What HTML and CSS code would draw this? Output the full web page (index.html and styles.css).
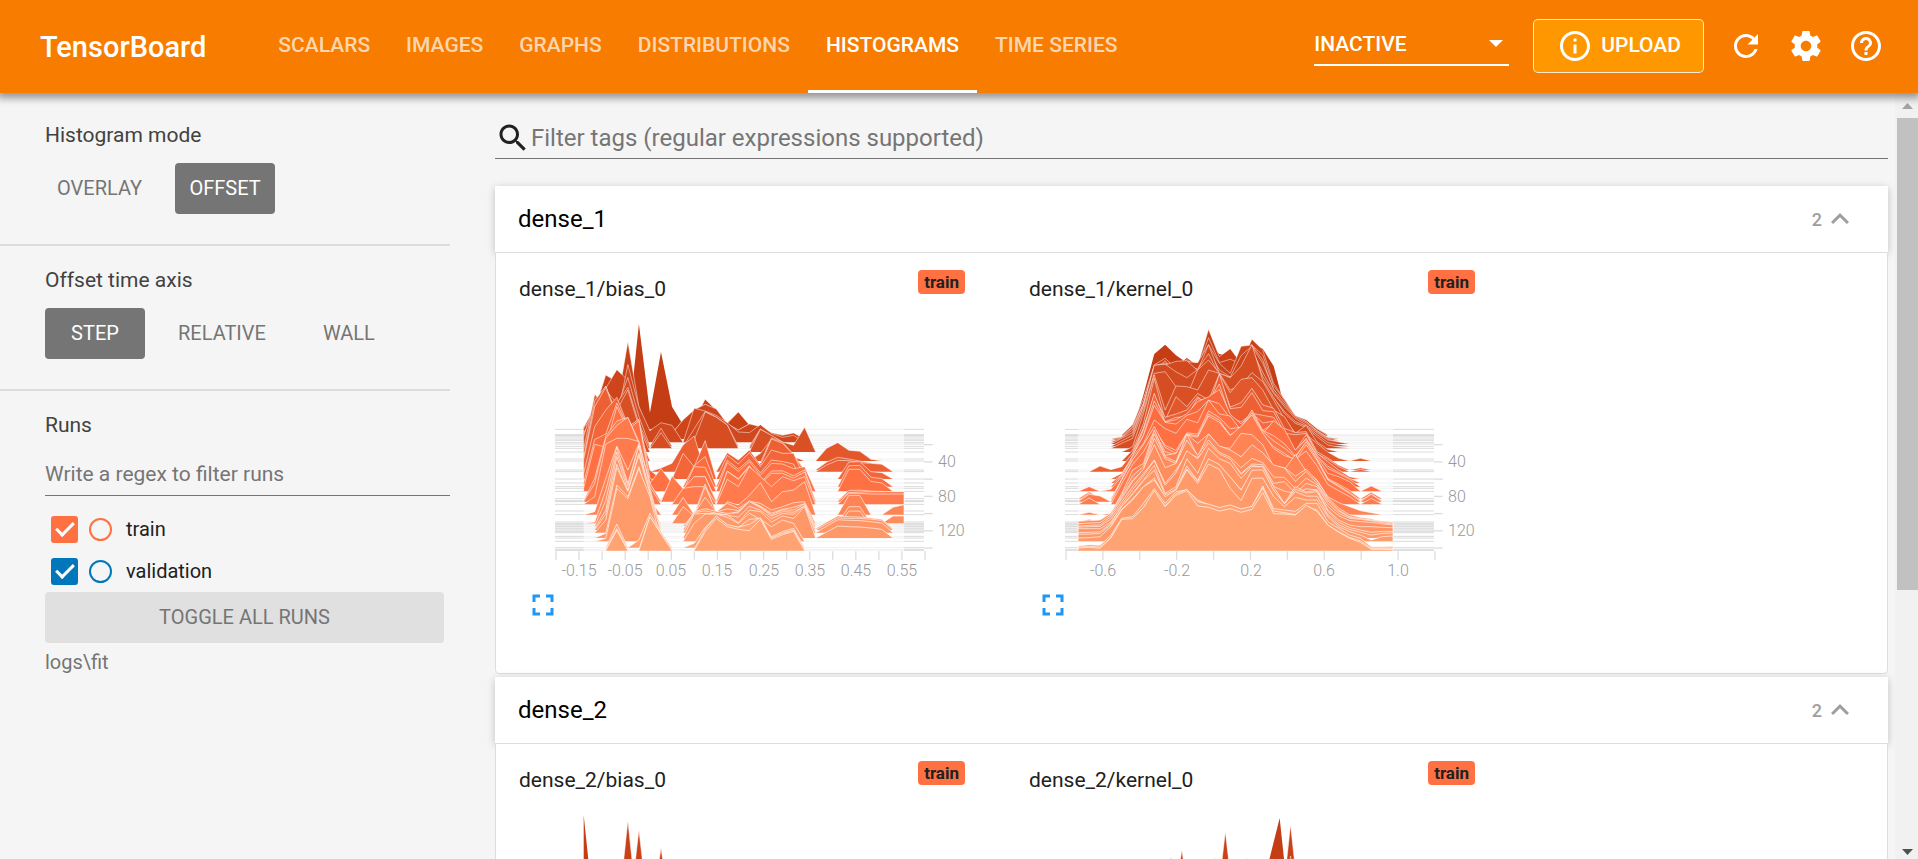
FILE: index.html
```html
<!DOCTYPE html>
<html lang="en">
<head>
<meta charset="utf-8">
<title>TensorBoard</title>
<link rel="stylesheet" href="styles.css">
</head>
<body>
<header class="topbar">
  <h1 class="brand">TensorBoard</h1>
  <nav class="tabs">
    <a class="tab" href="#scalars">SCALARS</a>
    <a class="tab" href="#images">IMAGES</a>
    <a class="tab" href="#graphs">GRAPHS</a>
    <a class="tab" href="#distributions">DISTRIBUTIONS</a>
    <a class="tab tab-active" href="#histograms" aria-current="page">HISTOGRAMS</a>
    <a class="tab" href="#timeseries">TIME SERIES</a>
  </nav>
  <div class="actions">
    <div class="select-wrap">
      <select class="plugin-select" aria-label="Inactive plugins"><option>INACTIVE</option></select>
      <svg class="select-arrow" viewBox="0 0 14 7" aria-hidden="true"><path d="M0 0h14L7 7z"/></svg>
    </div>
    <button class="upload" type="button">
      <svg class="icon" viewBox="0 0 24 24" aria-hidden="true"><path d="M11 7h2v2h-2zm0 4h2v6h-2zm1-9C6.48 2 2 6.48 2 12s4.48 10 10 10 10-4.48 10-10S17.52 2 12 2zm0 18c-4.41 0-8-3.59-8-8s3.59-8 8-8 8 3.59 8 8-3.59 8-8 8z"/></svg>
      <span>UPLOAD</span>
    </button>
    <button class="icon-button" type="button" aria-label="Reload">
      <svg class="icon" viewBox="0 0 24 24"><path d="M17.65 6.35C16.2 4.9 14.21 4 12 4c-4.42 0-7.99 3.58-7.99 8s3.57 8 7.99 8c3.73 0 6.84-2.55 7.73-6h-2.08c-.82 2.33-3.04 4-5.65 4-3.31 0-6-2.69-6-6s2.69-6 6-6c1.66 0 3.14.69 4.22 1.78L13 11h7V4l-2.35 2.35z"/></svg>
    </button>
    <button class="icon-button" type="button" aria-label="Settings">
      <svg class="icon" viewBox="0 0 24 24"><path d="M19.43 12.98c.04-.32.07-.64.07-.98s-.03-.66-.07-.98l2.11-1.65c.19-.15.24-.42.12-.64l-2-3.46c-.12-.22-.39-.3-.61-.22l-2.49 1c-.52-.4-1.08-.73-1.69-.98l-.38-2.65C14.46 2.18 14.25 2 14 2h-4c-.25 0-.46.18-.49.42l-.38 2.65c-.61.25-1.17.59-1.69.98l-2.49-1c-.23-.09-.49 0-.61.22l-2 3.46c-.13.22-.07.49.12.64l2.11 1.65c-.04.32-.07.65-.07.98s.03.66.07.98l-2.11 1.65c-.19.15-.24.42-.12.64l2 3.46c.12.22.39.3.61.22l2.49-1c.52.4 1.08.73 1.69.98l.38 2.65c.03.24.24.42.49.42h4c.25 0 .46-.18.49-.42l.38-2.65c.61-.25 1.17-.59 1.69-.98l2.49 1c.23.09.49 0 .61-.22l2-3.46c.12-.22.07-.49-.12-.64l-2.11-1.65zM12 15.5c-1.93 0-3.5-1.57-3.5-3.5s1.57-3.5 3.5-3.5 3.5 1.57 3.5 3.5-1.57 3.5-3.5 3.5z"/></svg>
    </button>
    <button class="icon-button" type="button" aria-label="Help">
      <svg class="icon" viewBox="0 0 24 24"><path d="M11 18h2v-2h-2v2zm1-16C6.48 2 2 6.48 2 12s4.48 10 10 10 10-4.48 10-10S17.52 2 12 2zm0 18c-4.41 0-8-3.59-8-8s3.59-8 8-8 8 3.59 8 8-3.59 8-8 8zm0-14c-2.21 0-4 1.79-4 4h2c0-1.1.9-2 2-2s2 .9 2 2c0 2-3 1.75-3 5h2c0-2.25 3-2.5 3-5 0-2.21-1.79-4-4-4z"/></svg>
    </button>
  </div>
</header>
<div class="workspace">
  <aside class="sidebar">
    <section class="panel panel-first">
      <h2 class="panel-title">Histogram mode</h2>
      <div class="choices">
        <button class="choice" type="button">OVERLAY</button>
        <button class="choice choice-on" type="button">OFFSET</button>
      </div>
    </section>
    <section class="panel">
      <h2 class="panel-title">Offset time axis</h2>
      <div class="choices">
        <button class="choice choice-on" type="button">STEP</button>
        <button class="choice" type="button">RELATIVE</button>
        <button class="choice" type="button">WALL</button>
      </div>
    </section>
    <section class="panel panel-runs">
      <h2 class="panel-title">Runs</h2>
      <input class="run-filter" type="text" placeholder="Write a regex to filter runs" aria-label="Filter runs">
      <ul class="runs">
        <li class="run run-train">
          <input class="run-check" type="checkbox" id="run-train" checked>
          <input class="run-only" type="radio" name="only" aria-label="Show only train">
          <label for="run-train">train</label>
        </li>
        <li class="run run-validation">
          <input class="run-check" type="checkbox" id="run-validation" checked>
          <input class="run-only" type="radio" name="only" aria-label="Show only validation">
          <label for="run-validation">validation</label>
        </li>
      </ul>
      <button class="toggle-all" type="button">TOGGLE ALL RUNS</button>
      <p class="logdir">logs\fit</p>
    </section>
  </aside>
  <main class="content">
    <div class="tag-filter">
      <svg class="icon" viewBox="0 0 24 24" aria-hidden="true"><path d="M15.5 14h-.79l-.28-.27C15.41 12.59 16 11.11 16 9.5 16 5.91 13.09 3 9.5 3S3 5.91 3 9.5 5.91 16 9.5 16c1.61 0 3.09-.59 4.23-1.57l.27.28v.79l5 4.99L20.49 19l-4.99-5zm-6 0C7.01 14 5 11.99 5 9.5S7.01 5 9.5 5 14 7.01 14 9.5 11.99 14 9.5 14z"/></svg>
      <input class="tag-input" type="text" placeholder="Filter tags (regular expressions supported)" aria-label="Filter tags">
    </div>
    <section class="group">
      <button class="group-head" type="button">
        <span class="group-name">dense_1</span>
        <span class="group-count">2</span>
        <svg class="chevron" viewBox="0 0 24 24" aria-hidden="true"><path d="M12 8l-6 6 1.410 1.410L12 10.830l4.590 4.580L18 14z"/></svg>
      </button>
      <div class="group-body">
        <article class="card">
          <div class="card-head"><h3 class="card-title">dense_1/bias_0</h3><span class="chip">train</span></div>
          <svg class="chart" data-chart="bias1" role="img" aria-label="Histogram of dense_1/bias_0"></svg>
          <button class="expand" type="button" aria-label="Toggle card size"><svg class="icon" viewBox="0 0 24 24"><path d="M7 14H5v5h5v-2H7v-3zm-2-4h2V7h3V5H5v5zm12 7h-3v2h5v-5h-2v3zM14 5v2h3v3h2V5h-5z"/></svg></button>
        </article>
        <article class="card">
          <div class="card-head"><h3 class="card-title">dense_1/kernel_0</h3><span class="chip">train</span></div>
          <svg class="chart" data-chart="kernel1" role="img" aria-label="Histogram of dense_1/kernel_0"></svg>
          <button class="expand" type="button" aria-label="Toggle card size"><svg class="icon" viewBox="0 0 24 24"><path d="M7 14H5v5h5v-2H7v-3zm-2-4h2V7h3V5H5v5zm12 7h-3v2h5v-5h-2v3zM14 5v2h3v3h2V5h-5z"/></svg></button>
        </article>
      </div>
    </section>
    <section class="group">
      <button class="group-head" type="button">
        <span class="group-name">dense_2</span>
        <span class="group-count">2</span>
        <svg class="chevron" viewBox="0 0 24 24" aria-hidden="true"><path d="M12 8l-6 6 1.410 1.410L12 10.830l4.590 4.580L18 14z"/></svg>
      </button>
      <div class="group-body">
        <article class="card">
          <div class="card-head"><h3 class="card-title">dense_2/bias_0</h3><span class="chip">train</span></div>
          <svg class="chart" data-chart="bias2" role="img" aria-label="Histogram of dense_2/bias_0"></svg>
        </article>
        <article class="card">
          <div class="card-head"><h3 class="card-title">dense_2/kernel_0</h3><span class="chip">train</span></div>
          <svg class="chart" data-chart="kernel2" role="img" aria-label="Histogram of dense_2/kernel_0"></svg>
        </article>
      </div>
    </section>
  </main>
  <div class="scrollbar" aria-hidden="true">
    <svg class="scroll-arrow scroll-up" viewBox="0 0 11 6"><path d="M0 6h11L5.500 0z"/></svg>
    <div class="scroll-track"><div class="scroll-thumb"></div></div>
    <svg class="scroll-arrow" viewBox="0 0 11 6"><path d="M0 0h11L5.500 6z"/></svg>
  </div>
</div>
<script src="charts.js"></script>
</body>
</html>
```
FILE: styles.css
```css
*, *::after { box-sizing: border-box; }
body {
  margin: 0;
  height: 100vh;
  display: flex;
  flex-direction: column;
  overflow: hidden;
  background: #f5f5f5;
  color: #212121;
  font: 400 21px/25px Roboto, "Liberation Sans", sans-serif;
}
h1, h2, h3, p, ul { margin: 0; padding: 0; font-weight: 400; }
button, input, select { font: inherit; color: inherit; border: 0; padding: 0; margin: 0; background: none; border-radius: 0; }
input:focus { outline: 0; }
.icon { width: 36px; height: 36px; fill: currentColor; display: block; flex: none; }

.topbar {
  position: relative;
  z-index: 2;
  display: flex;
  align-items: stretch;
  flex: none;
  height: 93px;
  padding: 0 34px 0 40px;
  background: #f77c00;
  color: #fff;
  font-weight: 500;
  box-shadow: 0 2px 8px 3px rgba(0, 0, 0, .4);
}
.brand { align-self: center; margin-right: 54px; font-size: 29px; line-height: 34px; font-weight: 500; }
.tabs { display: flex; }
.tab {
  display: flex;
  align-items: center;
  padding: 0 18px;
  border-bottom: 3px solid transparent;
  color: rgba(255, 255, 255, .7);
  text-decoration: none;
}
.tab-active { color: #fff; border-color: #fff; }
.actions { display: flex; align-items: center; gap: 24px; margin-left: auto; padding-bottom: 2px; }
.select-wrap { position: relative; width: 195px; }
.plugin-select { appearance: none; width: 100%; height: 40px; border-bottom: 2px solid #fff; }
.select-arrow { position: absolute; right: 6px; top: 14px; width: 14px; height: 7px; fill: #fff; pointer-events: none; }
.upload {
  display: flex;
  align-items: center;
  gap: 8px;
  height: 54px;
  padding: 0 22px 0 23px;
  background: #ff9800;
  border: 1px solid rgba(255, 255, 255, .8);
  border-radius: 5px;
}

.workspace { display: flex; flex: 1; min-height: 0; }
.sidebar { flex: 0 0 450px; }
.panel { padding: 22px 0 30px 45px; border-bottom: 2px solid #dcdcdc; }
.panel-first { padding-top: 30px; }
.panel-runs { border: 0; }
.panel-title { font-size: 21px; color: #424242; }
.choices { display: flex; gap: 21px; margin-top: 15px; }
.choice { min-width: 100px; height: 51px; padding: 0 12px; border-radius: 4px; font-size: 20px; color: #757575; }
.choice-on { background: #757575; color: #fff; }
.run-filter { width: 100%; height: 44px; margin-top: 14px; border-bottom: 1px solid #757575; }
.run-filter::placeholder, .tag-input::placeholder { color: #757575; opacity: 1; }
.runs { list-style: none; display: flex; flex-direction: column; gap: 15px; margin-top: 20px; padding-left: 6px; }
.run { display: flex; align-items: center; font-size: 20px; height: 27px; }
.run-train { --run: #ff7043; }
.run-validation { --run: #0077bb; }
.run-check {
  appearance: none;
  display: flex;
  align-items: center;
  justify-content: center;
  width: 27px;
  height: 27px;
  border-radius: 3px;
  background: var(--run);
}
.run-check:checked::after {
  content: "";
  width: 18px;
  height: 10px;
  margin-bottom: 5px;
  border: solid #fff;
  border-width: 0 0 3px 3px;
  transform: rotate(-45deg);
}
.run-only { appearance: none; width: 23px; height: 23px; margin: 0 14px 0 11px; border: 2px solid var(--run); border-radius: 50%; }
.toggle-all { display: block; width: calc(100% - 6px); height: 51px; margin-top: 7px; border-radius: 4px; background: #e0e0e0; color: #757575; font-size: 20px; }
.logdir { margin-top: 7px; font-size: 20px; color: #757575; }

.content { flex: 1; min-width: 0; padding: 24px 7px 0 45px; overflow: hidden; }
.tag-filter { display: flex; align-items: center; height: 42px; border-bottom: 1px solid #757575; }
.tag-input { flex: 1; min-width: 0; font-size: 24px; height: 40px; }
.group { margin-top: 3px; }
.tag-filter + .group { margin-top: 27px; }
.group-head {
  position: relative;
  display: flex;
  align-items: center;
  width: 100%;
  height: 66px;
  padding: 0 30px 0 23px;
  background: #fff;
  color: #000;
  text-align: left;
  box-shadow: 0 2px 8px rgba(0, 0, 0, .22);
}
.group-name { flex: 1; font-size: 24px; }
.group-count { font-size: 18px; font-weight: 500; color: #9e9e9e; }
.chevron { width: 36px; height: 36px; fill: #9e9e9e; }
.group-body {
  position: relative;
  display: flex;
  gap: 60px;
  padding: 17px 23px 50px;
  background: #fff;
  border: 1px solid #ddd;
  border-radius: 0 0 4px 4px;
}
.card { width: 450px; }
.card-head { display: flex; justify-content: space-between; height: 32px; padding-right: 4px; }
.card-title { align-self: flex-end; font-size: 21px; }
.chip { align-self: flex-start; height: 24px; padding: 0 6px; border-radius: 4px; background: #ff7043; font-size: 17px; line-height: 24px; font-weight: 700; }
.chart { display: block; width: 450px; height: 277px; margin-top: 8px; overflow: visible; }
.axis-label { font-size: 16px; font-weight: 300; fill: #999; }
.expand { margin-left: 6px; color: #2196f3; display: block; }

.scrollbar { flex: 0 0 23px; display: flex; flex-direction: column; align-items: center; padding: 10px 0 4px 2px; background: #f1f1f1; }
.scroll-arrow { width: 11px; height: 6px; fill: #505050; flex: none; }
.scroll-up { fill: #a3a3a3; }
.scroll-track { flex: 1; width: 100%; padding: 9px 0 5px; }
.scroll-thumb { height: 65%; background: #c1c1c1; }
```
FILE: charts.js
```js
// Ridge-line histograms. Plot units are thirds of a pixel.
// Each layer: baseline | bin:top ... ; bins that are left out are empty.
const STEPS = [358, 374, 377, 381, 387, 391, 397, 402, 409, 415, 426, 447, 453, 480, 485, 507, 519, 530,
  535, 544, 566, 572, 575, 583, 603, 614, 636, 640, 644, 648, 651, 656, 660, 664, 668, 679, 684, 694, 713, 718, 722];

const CHARTS = {
  bias1: {
    x0: 161, step: 33.14, ends: [161, 1122], ticks: 17,
    skip: [377, 391, 402, 447, 519, 535, 566, 603, 636, 644, 651, 664, 679],
    labels: [[1, '-0.15'], [3, '-0.05'], [5, '0.05'], [7, '0.15'], [9, '0.25'], [11, '0.35'], [13, '0.45'], [15, '0.55']],
    layers: `358|5:42 6:308 7:126 8:290 9:345
374|0:350 1:320 2:300 3:290 4:95 5:290 9:335 10:330 11:268 12:300 13:340 14:306 15:345 16:352 17:370
381|0:353 1:300 2:195 3:215 4:280 5:310 8:370 9:330 10:300 11:283 12:297 13:342 14:360 15:342 16:350 17:368
387|0:353 1:290 2:235 3:179 4:210 5:300 8:370 9:330 10:300 11:283 12:297 13:342 14:360 15:342 16:350 17:368 18:376 19:369
397|0:355 1:310 2:228 3:330 4:164 5:290 6:362 7:338 8:346 10:295 11:303 12:316 13:338 14:366 15:368 16:344 17:370 18:382 19:376
415|0:370 1:325 2:240 3:280 4:232 5:340 7:368 10:390 11:306 12:322 13:345 16:358 17:378 18:402
426|0:380 1:270 2:260 3:300 4:240 5:350 16:358 17:376 18:396 19:406 20:352
453|0:420 1:253 2:290 3:320 4:330 5:370 16:430 17:388 18:402 19:440 22:415 23:398 24:421 25:424 26:448
485|0:450 1:290 2:232 3:320 4:350 5:370 7:474 8:460 9:405 10:378 13:428 14:450 15:420 16:465 17:387 18:400 19:435 22:465 23:451 24:452 25:458 26:460 27:463
507|0:490 1:350 2:300 3:262 4:345 5:340 6:480 9:430 10:470 11:392 13:436 14:462 15:428 16:470 17:420 18:430 19:430 24:456 25:455 26:485 27:488
544|0:535 1:403 2:411 3:290 4:360 5:332 6:520 7:476 8:520 10:470 11:472 13:458 14:484 15:455 16:496 17:460 18:462 19:476 20:470 24:478 25:478 26:514 27:519
575|1:520 2:385 3:346 4:322 5:400 6:520 8:498 9:536 10:500 11:500 13:484 14:508 15:470 16:522 17:490 18:490 19:504 20:486 24:548 25:546 26:545 27:545 28:545 29:545
583|1:560 2:402 3:385 4:385 5:395 6:530 9:535 10:530 11:530 13:508 14:530 15:470 16:500 17:530 18:500 19:512 20:500 24:550 25:550 26:552 27:552 28:552 29:552
614|1:605 2:505 3:408 4:480 5:400 6:570 9:562 11:522 13:575 14:585 15:556 16:518 17:575 18:545 19:540 20:515 24:556 25:556 28:592 29:584
640|1:636 2:540 3:412 4:520 5:405 6:600 9:590 10:618 11:530 12:605 13:580 14:595 15:574 16:580 17:600 18:590 19:578 20:575 24:590 25:590 28:618 29:618
656|2:600 3:440 4:540 5:430 6:535 10:608 11:598 12:606 13:612 14:605 15:572 16:590 17:614 18:600 19:600 20:582 22:636 23:618 24:620 25:621 26:624 27:628
684|2:670 3:525 4:560 5:470 6:590 10:612 11:610 12:612 13:615 14:638 15:600 16:605 17:636 18:618 19:625 20:590 22:666 23:648 24:650 25:651 26:654 27:658
694|2:685 3:535 4:566 5:476 6:560 10:640 11:612 12:612 13:622 14:640 15:610 16:628 17:650 18:630 19:640
713|3:642 5:690 6:610 7:665 10:700 11:652 12:620 13:645 14:652 15:628 16:625 17:680 18:665 19:655
722|3:661 6:620 7:672 11:665 12:625 13:650 14:658 15:662 16:628 17:688 18:674 19:664`
  },
  kernel1: {
    x0: 115, step: 32.55, ends: [114, 1059], ticks: 11,
    skip: [381, 447, 535, 603, 644, 651, 664],
    labels: [[1, '-0.6'], [3, '-0.2'], [5, '0.2'], [7, '0.6'], [9, '1.0']],
    layers: `358|6:255 7:132 8:104 9:136 10:158 11:170 12:100 13:132 14:138 15:160 16:100 17:116 18:168 19:290 20:340
374|5:345 6:270 7:170 8:150 9:170 10:143 11:167 12:58 13:140 14:116 15:160 16:88 17:120 18:220 19:268 20:318 21:330 22:356
387|4:380 5:350 6:280 7:184 8:152 9:200 10:155 11:158 12:104 13:160 14:190 15:109 16:105 17:150 18:240 19:280 20:320 21:335 22:362 23:382
402|4:385 5:368 6:290 7:167 8:165 9:154 10:152 11:182 12:104 13:190 14:202 15:190 16:115 17:200 18:250 19:290 20:325 21:345 22:368 23:390 24:396
415|4:400 5:385 6:300 7:190 8:185 9:230 10:258 11:180 12:150 13:190 14:203 15:168 16:104 17:210 18:262 19:310 20:340 21:352 22:380 23:405 24:411
426|5:410 6:310 7:195 8:300 9:228 10:230 11:240 12:180 13:190 14:240 15:225 16:188 17:215 18:270 19:328 20:370 21:346 22:396 23:418
453|5:420 6:340 7:205 8:330 9:260 10:290 11:250 12:270 13:192 14:248 15:208 16:203 17:240 18:300 19:320 20:372 21:374 22:400 23:426 24:445 26:445
485|2:468 3:479 4:470 5:430 6:355 7:258 8:322 9:312 10:300 11:260 12:290 13:192 14:296 15:292 16:248 17:302 18:305 19:370 20:374 21:370 22:432 23:448 24:470 26:478
507|4:490 5:440 6:360 7:250 8:335 9:322 10:320 11:265 12:276 13:222 14:320 15:336 16:310 17:316 18:322 19:370 20:422 21:374 22:430 23:455 24:480 25:500
544|1:530 3:538 4:500 5:440 6:400 7:330 8:356 9:370 10:328 11:338 12:270 13:312 14:318 15:362 16:304 17:372 18:332 19:358 20:420 21:388 22:440 23:490 24:500 25:515 27:528
575|1:553 2:558 4:510 5:450 6:404 7:350 8:412 9:430 10:372 11:378 12:312 13:330 14:380 15:360 16:318 17:374 18:410 19:430 20:452 21:404 22:452 23:510 24:530 25:550 27:553
614|1:607 3:610 4:550 5:480 6:460 7:360 8:436 9:430 10:372 11:400 12:372 13:410 14:415 15:370 16:374 17:404 18:470 19:478 20:434 21:484 22:510 23:560 24:578 25:590 26:602 27:608
640|0:634 1:632 2:630 3:610 4:560 5:510 6:480 7:385 8:446 9:460 10:372 11:440 12:372 13:408 14:420 15:440 16:404 17:428 18:465 19:474 20:514 21:484 22:520 23:568 24:600 25:620 26:627 27:630 28:633 29:636
656|0:648 1:646 2:645 3:620 4:575 5:530 6:490 7:450 8:520 9:480 10:430 11:442 12:412 13:440 14:450 15:490 16:462 17:464 18:520 19:515 20:550 21:520 22:530 23:580 24:610 25:625 26:628 27:632 28:638 29:642
668|0:656 1:656 2:656 3:636 4:590 5:550 6:510 7:466 8:550 9:530 10:446 11:490 12:415 13:446 14:460 15:505 16:470 17:470 18:530 19:580 20:530 21:546 22:540 23:600 24:630 25:645 26:650 27:650 28:652 29:653
694|0:684 1:683 2:680 3:650 4:600 5:570 6:530 7:510 8:560 9:540 10:480 11:520 12:462 13:478 14:535 15:572 16:505 17:504 18:560 19:590 20:562 21:570 22:570 23:620 24:650 25:665 26:675 27:690 28:680 29:678
713|0:708 1:704 2:706 3:676 4:625 5:620 6:580 7:536 8:580 9:545 10:540 11:570 12:585 13:595 14:588 15:598 16:590 17:528 18:596 19:600 20:604 21:580 22:580 23:635 24:655 25:675 26:685 27:710 28:710 29:709
722|0:714 1:712 2:715 3:684 4:628 5:626 6:592 7:542 8:590 9:556 10:542 11:588 12:592 13:603 14:596 15:607 16:598 17:548 18:611 19:612 20:615 21:586 22:604 23:645 24:667 25:685 26:697 27:718 28:718 29:719`
  },
  bias2: {
    x0: 161, step: 33.14, ends: [161, 1122], ticks: 17, labels: [], skip: [],
    layers: `358|0:42
374|4:60 7:141
377|5:87
722|4:650 5:640 6:660`
  },
  kernel2: {
    x0: 393, step: 32.6, ends: [114, 1059], ticks: 11, labels: [], skip: [],
    layers: `358|9:182 10:51
374|1:147 5:93 11:72
377|0:168 4:168 7:171 11:165
722|4:650 5:640 6:660`
  }
};

const PALETTE = [[358, 197, 61, 20], [544, 255, 112, 67], [722, 255, 163, 114]];
const BINS = 30;

function colorAt(y) {
  const [a, b] = y < PALETTE[1][0] ? PALETTE : PALETTE.slice(1);
  const t = (y - a[0]) / (b[0] - a[0]);
  return 'rgb(' + [1, 2, 3].map(i => Math.round(a[i] + (b[i] - a[i]) * t)).join() + ')';
}

function parseLayer(line) {
  const [base, points] = line.split('|');
  const heights = new Array(BINS).fill(0);
  points.split(' ').forEach(p => {
    const [bin, top] = p.split(':').map(Number);
    heights[bin] = base - top;
  });
  return { base: Number(base), heights };
}

// Steps between two listed layers blend them, with a small ripple per bin.
function layerAt(keys, base) {
  const next = keys.findIndex(k => k.base >= base);
  if (keys[next].base === base) return keys[next];
  const a = keys[next - 1], b = keys[next];
  const t = (base - a.base) / (b.base - a.base);
  return {
    base,
    heights: a.heights.map((h, i) => {
      if (!h || !b.heights[i]) return 0;
      const mid = h + (b.heights[i] - h) * t;
      return mid * (1 + 0.06 * Math.sin(i * 12.9 + base * 4.1));
    })
  };
}

function ridge(layer, cfg) {
  const { base, heights } = layer;
  const x = i => Math.max(cfg.ends[0], Math.min(cfg.ends[1], cfg.x0 + cfg.step * i)).toFixed(1);
  let out = '';
  for (let i = 0; i < BINS; i++) {
    if (!heights[i]) continue;
    let d = `M${x(i - 1)} ${base}`;
    for (; i < BINS && heights[i]; i++) d += `L${x(i)} ${(base - heights[i]).toFixed(1)}`;
    d += `L${x(i)} ${base}`;
    const glow = (0.45 + 0.2 * (base - 358) / 364).toFixed(2);
    out += `<path d="${d}" fill="${colorAt(base)}" stroke="#fff" stroke-opacity="${base < 370 ? 0 : glow}" stroke-width="3" stroke-linejoin="bevel"/>`;
  }
  return out;
}

function draw(svg) {
  const cfg = CHARTS[svg.dataset.chart];
  const keys = cfg.layers.split('\n').map(parseLayer);
  const full = cfg.labels.length > 0;
  const bases = full ? STEPS.filter(y => !cfg.skip.includes(y)) : keys.map(k => k.base);
  let shapes = '', text = '';
  STEPS.forEach(y => {
    shapes += `<path d="M75 ${y}H1182" stroke="#000" stroke-opacity=".06" stroke-width="3"/>`;
    shapes += `<path d="M75 ${y}H${cfg.ends[0]}M${cfg.ends[1]} ${y}H1182" stroke="#000" stroke-opacity=".09" stroke-width="3"/>`;
  });
  bases.forEach(b => { shapes += ridge(layerAt(keys, b), cfg); });
  shapes += '<path d="M0 724H1400V732H0z" fill="#fff"/>';
  const gap = 1107 / (cfg.ticks - 1);
  for (let i = 0; i < cfg.ticks; i++) shapes += `<path d="M${78 + gap * i} 724V749" stroke="#ddd" stroke-width="4"/>`;
  for (let i = 0; i < 7; i++) shapes += `<path d="M1182 ${404 + 51.7 * i}H1208" stroke="#ddd" stroke-width="4"/>`;
  cfg.labels.forEach(([tick, s]) => {
    text += `<text class="axis-label" text-anchor="middle" x="${Math.round((78 + gap * tick) / 3) + 11}" y="266">${s}</text>`;
  });
  if (full) [['40', 157], ['80', 192], ['120', 226]].forEach(([s, y]) => {
    text += `<text class="axis-label" x="419" y="${y}">${s}</text>`;
  });
  svg.innerHTML = `<svg x="11" y="0" width="450" height="277" viewBox="0 0 1350 831">${shapes}</svg>${text}`;
}

document.querySelectorAll('.chart').forEach(draw);
```
